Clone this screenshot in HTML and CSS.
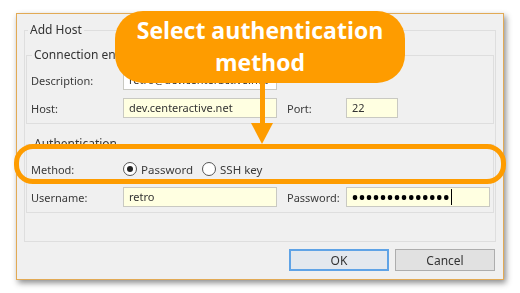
FILE: index.html
```html
<!DOCTYPE html>
<html lang="en">
<head>
    <meta charset="UTF-8">
    <title>Add Host</title>
    <link rel="stylesheet" href="styles.css">
</head>
<body>
    <div class="stage">
        <div class="dialog">
            <fieldset class="group main-group">
                <legend>Add Host</legend>

                <fieldset class="group">
                    <legend>Connection endpoint</legend>
                    <div class="row">
                        <label class="lbl">Description:</label>
                        <div class="field wide plain">retro@dev.centeractive.net</div>
                    </div>
                    <div class="row">
                        <label class="lbl">Host:</label>
                        <div class="field wide">dev.centeractive.net</div>
                        <label class="lbl lbl-right">Port:</label>
                        <div class="field small">22</div>
                    </div>
                </fieldset>

                <fieldset class="group auth-group">
                    <legend>Authentication</legend>
                    <div class="row">
                        <label class="lbl">Method:</label>
                        <span class="radio checked"></span>
                        <span class="radio-text">Password</span>
                        <span class="radio"></span>
                        <span class="radio-text">SSH key</span>
                    </div>
                    <div class="row">
                        <label class="lbl">Username:</label>
                        <div class="field wide">retro</div>
                        <label class="lbl lbl-right">Password:</label>
                        <div class="field pass"><span class="dots">••••••••••••••</span></div>
                    </div>
                </fieldset>
            </fieldset>

            <div class="buttons">
                <button class="btn btn-default">OK</button>
                <button class="btn">Cancel</button>
            </div>
        </div>

        <!-- annotation on top of the screenshot -->
        <div class="callout">Select authentication<br>method</div>
        <div class="arrow-stem"></div>
        <div class="arrow-head"></div>
        <div class="highlight"></div>
    </div>
</body>
</html>
```

FILE: styles.css
```css
* {
    box-sizing: border-box;
}

body {
    margin: 0;
    background: #ffffff;
    font-family: 'Noto Sans', 'DejaVu Sans', sans-serif;
    font-size: 11px;
    color: #3a3a3a;
}

.stage {
    position: relative;
    width: 520px;
    height: 293px;
    overflow: hidden;
    padding: 13px 0 0 16px;
}

/* the dialog window (screenshot, slightly blurred) */
.dialog {
    width: 488px;
    height: 267px;
    background: #f0f0f0;
    border: 1px solid #e2aa55;
    box-shadow: 2px 3px 6px rgba(0, 0, 0, 0.45);
    padding: 8px 7px 0 7px;
    filter: blur(0.5px);
}

.group {
    margin: 0;
    padding: 7px 2px 5px 3px;
    border: 1px solid #dedede;
    min-width: 0;
}

.group legend {
    padding: 0 2px;
    margin-left: 2px;
    font-size: 12px;
    line-height: 16px;
    color: #333;
}

.main-group {
    height: 220px;
    padding: 9px 1px 0 1px;
}

.main-group > .auth-group {
    margin-top: 12px;
}

.row {
    display: flex;
    align-items: center;
    height: 20px;
}

.row + .row {
    margin-top: 8px;
}

.lbl {
    width: 93px;
    padding-left: 1px;
}

.lbl-right {
    width: 60px;
    margin-left: 9px;
}

.field {
    height: 20px;
    background: #ffffe1;
    border: 1px solid #c9c9c2;
    padding: 0 5px;
    line-height: 18px;
    color: #333;
    white-space: nowrap;
    overflow: hidden;
}

.field.plain {
    background: #ffffff;
}

.wide {
    width: 154px;
}

.small {
    width: 52px;
}

.pass {
    width: 144px;
    display: flex;
    align-items: center;
    overflow: visible;
}

.dots {
    font-size: 16px;
    font-weight: bold;
    letter-spacing: 1px;
    color: #000;
    line-height: 16px;
    padding-right: 1px;
    border-right: 1px solid #000;
}

.radio {
    width: 14px;
    height: 14px;
    border: 1px solid #555;
    border-radius: 50%;
    background: #fff;
    display: flex;
    align-items: center;
    justify-content: center;
}

.radio.checked::after {
    content: "";
    width: 6px;
    height: 6px;
    border-radius: 50%;
    background: #222;
}

.radio-text {
    margin: 0 9px 0 4px;
    font-size: 11.5px;
}

.buttons {
    display: flex;
    justify-content: flex-end;
    gap: 6px;
    margin-top: 7px;
    padding-right: 1px;
}

.btn {
    width: 100px;
    height: 22px;
    background: #e1e1e1;
    border: 1px solid #adadad;
    font-family: inherit;
    font-size: 12px;
    color: #333;
}

.btn-default {
    border: 2px solid #5fa3e6;
    background: #e3e8ee;
}

/* annotation overlay */
.callout {
    position: absolute;
    left: 115px;
    top: 11px;
    width: 290px;
    height: 72px;
    background: #fe9c00;
    border-radius: 28px;
    color: #fff;
    font-family: 'Open Sans', sans-serif;
    font-weight: bold;
    font-size: 23px;
    line-height: 32px;
    text-align: center;
    padding-top: 3px;
}

.arrow-stem {
    position: absolute;
    left: 260px;
    top: 80px;
    width: 5px;
    height: 45px;
    background: #fe9c00;
}

.arrow-head {
    position: absolute;
    left: 251px;
    top: 123px;
    width: 0;
    height: 0;
    border-left: 11px solid transparent;
    border-right: 11px solid transparent;
    border-top: 21px solid #fe9c00;
}

.highlight {
    position: absolute;
    left: 14px;
    top: 144px;
    width: 492px;
    height: 40px;
    border: 5px solid #fe9c00;
    border-radius: 19px;
}
```
